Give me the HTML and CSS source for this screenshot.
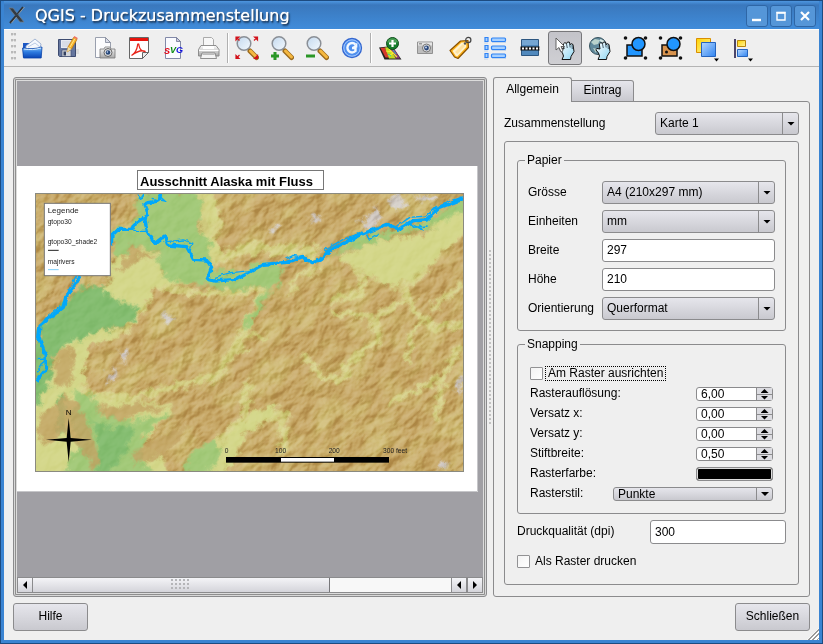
FILE: index.html
```html
<!DOCTYPE html>
<html lang="de">
<head>
<meta charset="utf-8">
<title>QGIS - Druckzusammenstellung</title>
<link rel="stylesheet" href="styles.css">
</head>
<body>
<svg class="defs" aria-hidden="true">
  <defs>
    <linearGradient id="lens" x1="0" y1="0" x2="1" y2="1"><stop offset="0" stop-color="#c3d9ef"/><stop offset="1" stop-color="#f4f9fd"/></linearGradient>
    <linearGradient id="blue" x1="0" y1="0" x2="1" y2="1"><stop offset="0" stop-color="#b5d8ff"/><stop offset="1" stop-color="#2f83f0"/></linearGradient>
    <linearGradient id="gold" x1="0" y1="0" x2="1" y2="1"><stop offset="0" stop-color="#ffd400"/><stop offset="1" stop-color="#fff3a0"/></linearGradient>
    <linearGradient id="folder" x1="0" y1="0" x2="0" y2="1"><stop offset="0" stop-color="#8cc8fb"/><stop offset=".45" stop-color="#2d7be0"/><stop offset="1" stop-color="#0a44b4"/></linearGradient>
    <linearGradient id="silver" x1="0" y1="0" x2="0" y2="1"><stop offset="0" stop-color="#fafafa"/><stop offset="1" stop-color="#a9a9a9"/></linearGradient>
    <linearGradient id="ice" x1="0" y1="0" x2="1" y2="1"><stop offset="0" stop-color="#fff"/><stop offset="1" stop-color="#8fd6f2"/></linearGradient>
    <symbol id="magnifier" viewBox="0 0 26 26">
      <path d="M15 14l3 3" stroke="#777" stroke-width="2"/>
      <path d="M17 16l6.500 6.500" stroke="#9b6a1c" stroke-width="5" stroke-linecap="round"/>
      <path d="M17.500 16l6 6" stroke="#f5b840" stroke-width="3" stroke-linecap="round"/>
      <circle cx="11" cy="8.500" r="6.800" fill="url(#lens)" stroke="#8a8f96" stroke-width="1.500"/>
    </symbol>
    <symbol id="hand" viewBox="0 0 16 19">
      <path d="M3 18.500h8.500l.5-3 3-5-1-7-1.800-.8-.8 1-1.200-2.700-1.900.2-.6 1.300-1.900-.8-1.500 1.300.7 5L2 7.500.8 8.700 3.500 12 4.500 15z" fill="url(#ice)" stroke="#111" stroke-width="1" stroke-linejoin="round"/>
      <path d="M7.500 3l.8 4M10.500 2.500l.7 4M13 4l.3 4" stroke="#234" stroke-width=".8" fill="none"/>
    </symbol>
  </defs>
</svg>

<div class="window">
  <header class="titlebar">
    <svg class="app-icon" width="18" height="18" viewBox="0 0 18 18" aria-hidden="true"><path d="M1 2h4l11 14h-4z" fill="#333b43" stroke="#6e7d8b" stroke-width=".8"/><path d="M15 1L9.500 8M8 10l-6 7" stroke="#2e3338" stroke-width="2"/><path d="M16.500 1l-6 7M8.500 11l-5 6" stroke="#a7a9a6" stroke-width=".8"/></svg>
    <h1>QGIS - Druckzusammenstellung</h1>
    <div class="window-buttons">
      <button type="button" aria-label="Minimieren"><svg width="20" height="20" viewBox="0 0 20 20"><path d="M5 14h9" stroke="#fff" stroke-width="2.400"/></svg></button>
      <button type="button" aria-label="Maximieren"><svg width="20" height="20" viewBox="0 0 20 20"><path d="M6 7h8v7H6z" fill="none" stroke="#fff" stroke-width="1.400"/><path d="M5.300 6.500h9.400" stroke="#fff" stroke-width="1.600"/></svg></button>
      <button type="button" aria-label="Schließen"><svg width="20" height="20" viewBox="0 0 20 20"><path d="M6 6l8 8M14 6l-8 8" stroke="#fff" stroke-width="2.200"/></svg></button>
    </div>
  </header>

  <nav class="toolbar" aria-label="Werkzeuge">
    <span class="grip"></span>
    <button type="button" aria-label="Öffnen"><svg viewBox="0 0 26 26"><path d="M2 8h6l2 2h10v12H2z" fill="#1b57c4"/><path d="M5 11l9-7 6 5-1 6H5z" fill="#f5f8fd" stroke="#8fa6cc" stroke-width=".8"/><path d="M7 12l7-4 5 4" fill="none" stroke="#bccce6"/><path d="M1.500 13c6 1 13 1 19.500-1l-.8 11H2.500z" fill="url(#folder)" stroke="#0a43a8" stroke-width=".8"/><path d="M3 14c6 1 11 .8 17-1" stroke="#d4ebff" fill="none"/></svg></button>
    <button type="button" aria-label="Speichern"><svg viewBox="0 0 26 26"><path d="M17 14h6v5h-5z" fill="#ddd"/><path d="M2.500 4.500h17v17h-16l-1-1z" fill="#66779f" stroke="#3d4b70"/><path d="M5 5h11v8H5z" fill="#e8ebf2"/><path d="M6 7h8M6 9h8M6 11h8" stroke="#c3c8d6" stroke-width=".8"/><path d="M6 15h9v6.500H6z" fill="#d3d6dc" stroke="#394568" stroke-width=".6"/><path d="M7.500 16.500H10v4H7.500z" fill="#33405f"/><path d="M11 17l1-5 5.500-9.500 3.500 2-5.500 9.500z" fill="#f9b62c" stroke="#b87312" stroke-width=".7"/><path d="M17.500 2.500l3.500 2 .8-1.500-3.500-2z" fill="#f1705d"/><path d="M14 12l5-8.500" stroke="#ffe58b"/><path d="M11 17l1-5 3.500 2z" fill="#eadcae"/></svg></button>
    <button type="button" aria-label="Als Bild exportieren"><svg viewBox="0 0 26 26"><path d="M4.500 2.500h10l5 5v15h-15z" fill="#fcfcfd" stroke="#9aa0ae"/><path d="M14.500 2.500v5h5z" fill="#d9dce6" stroke="#7f8597" stroke-width=".8"/><path d="M9 14h4l1-2h5l1 2h4v9H9z" fill="url(#silver)" stroke="#777" stroke-width=".8"/><circle cx="17" cy="17.500" r="4" fill="#ddd" stroke="#666"/><circle cx="17" cy="17.500" r="2.300" fill="#27487a"/><circle cx="16.400" cy="17" r=".8" fill="#cfe0ff"/></svg></button>
    <button type="button" aria-label="Als PDF exportieren"><svg viewBox="0 0 26 26"><path d="M3.500 2.500h19v15l-6 6h-13z" fill="#fff" stroke="#666"/><path d="M4 3h18v3H4z" fill="#e8130c"/><path d="M22.500 17.500h-6v6z" fill="#eee" stroke="#666"/><path d="M5.500 20.500c3-2 5.500-6 6-10 0-2 1.500-2 1.500 0 .5 3.500 3 6 6.500 6-3-1.500-8-.5-14 4z" fill="none" stroke="#e8241a" stroke-width="1.300"/></svg></button>
    <button type="button" aria-label="Als SVG exportieren"><svg viewBox="0 0 26 26"><path d="M4.500 2.500h11l4 4v17h-15z" fill="#fafbff" stroke="#8289a8"/><path d="M15.500 2.500v4h4z" fill="#c7cbe0" stroke="#6d7390" stroke-width=".8"/><text x="3" y="19" class="glyph"><tspan fill="#e30010">S</tspan><tspan fill="#098a12" dy="-1">V</tspan><tspan fill="#1010e0">G</tspan></text></svg></button>
    <button type="button" aria-label="Drucken"><svg viewBox="0 0 26 26"><path d="M7.500 13V2.500h8l2 2V13z" fill="#f7f7f7" stroke="#aaa"/><path d="M5 10.500h15l3 4v6.500H2.500v-6.500z" fill="url(#silver)" stroke="#858585" stroke-width=".9"/><path d="M7 11h11v3H7z" fill="#fff"/><path d="M3 15.500h19.500" stroke="#fff"/><path d="M6 18h13l1.500 5.500h-16z" fill="#f4f4f4" stroke="#777" stroke-width=".8"/><path d="M6.500 19.500h12" stroke="#bbb"/></svg></button>
    <span class="separator"></span>
    <button type="button" aria-label="Volle Ausdehnung"><svg viewBox="0 0 26 26"><use href="#magnifier" x="-1" width="26" height="26"/><g stroke="#d2111a" stroke-width="1.200" fill="#d2111a"><path d="M2 2h3L2 5zM23.500 2h-3l3 3zM2 23.500h3l-3-3zM23.500 23.500h-3l3-3zM2 2l3.500 3.500M23.500 2L20 5.500M2 23.500L5.500 20"/></g></svg></button>
    <button type="button" aria-label="Hineinzoomen"><svg viewBox="0 0 26 26"><use href="#magnifier" x="-1" width="26" height="26"/><path d="M6 17v8M2 21h8" stroke="#2a9626" stroke-width="3"/></svg></button>
    <button type="button" aria-label="Herauszoomen"><svg viewBox="0 0 26 26"><use href="#magnifier" x="-1" width="26" height="26"/><path d="M2 21h9" stroke="#2a9626" stroke-width="3"/></svg></button>
    <button type="button" aria-label="Aktualisieren"><svg viewBox="0 0 26 26"><circle cx="13" cy="13" r="9.500" fill="#4e8fee" stroke="#3567cf" stroke-width="1.300"/><circle cx="13" cy="13" r="8.200" fill="none" stroke="#a8cbff" stroke-width="1"/><path d="M16.500 9.500A4.700 4.700 0 1 0 16.500 16v-3H13" fill="none" stroke="#f3f8ff" stroke-width="2.400"/><path d="M18.300 7.500v5h-5z" fill="#f3f8ff"/></svg></button>
    <span class="separator"></span>
    <button type="button" aria-label="Karte hinzufügen"><svg viewBox="0 0 26 26"><path d="M2 12.500L15 11l9.500 13.500H7.500z" fill="#222"/><path d="M3.500 13L8 12.500l4 10H8.500z" fill="#d63a2d"/><path d="M8 12.500l4-.5 7 11.500h-7z" fill="#c3d922"/><path d="M12 12l4-.3 7 11.800h-4z" fill="#8f377a"/><path d="M9 16l6 1 5 5M12 14l4 4-4 3" stroke="#f4ec33" fill="none" stroke-width="1.200"/><path d="M11 19l3 2M16 15l3 4" stroke="#2bbac9"/><circle cx="15.500" cy="8.500" r="6" fill="#167d2c" stroke="#0c4d18"/><path d="M10 7.500a5.700 5.700 0 0 1 11 0" fill="#5fad66" opacity=".7"/><path d="M15.500 5v7M12 8.500h7" stroke="#fff" stroke-width="2.200"/></svg></button>
    <button type="button" aria-label="Bild hinzufügen"><svg viewBox="0 0 26 26"><path d="M5.500 7h15v11.500h-15z" fill="#bdbdbd" stroke="#919191"/><path d="M6 7.500h14v3H6z" fill="#e5e5e5"/><path d="M7 8h3v1.500H7z" fill="#999"/><circle cx="14.500" cy="13" r="4" fill="#dcdcdc" stroke="#777"/><circle cx="14.500" cy="13" r="2.400" fill="#29477a"/><circle cx="14" cy="12.500" r=".9" fill="#d7e5ff"/></svg></button>
    <button type="button" aria-label="Beschriftung hinzufügen"><svg viewBox="0 0 26 26"><path d="M3 15.500L13.500 6l7.500-.5.5 7L11 23.500 7.500 22z" fill="#ffb31a" stroke="#8a5200" stroke-width="1.200" stroke-linejoin="round"/><path d="M5.500 16l9-8.500h4.500l.3 4.500-9 9.500-1.500-.5z" fill="#fff3cf"/><path d="M8 17l8-8 2 2-7.500 8z" fill="#ffe2a0"/><circle cx="18" cy="8.500" r="1.200" fill="#555"/><circle cx="21.300" cy="5" r="2.600" fill="none" stroke="#444" stroke-width="1.200"/></svg></button>
    <button type="button" aria-label="Legende hinzufügen"><svg viewBox="0 0 26 26"><g fill="#a6d0ff" stroke="#2f83f5" stroke-width="1.200"><path d="M3 2.500h3v4H3zM3 10.500h3v4H3zM3 18.500h3v4H3z"/><rect x="9.500" y="3" width="14" height="3.500" rx="1"/><rect x="9.500" y="11" width="14" height="3.500" rx="1"/><rect x="9.500" y="19" width="14" height="3.500" rx="1"/></g><path d="M10 7.500h14M10 15.500h14M10 23.500h14M2 8h4M2 16h4M2 24h4" stroke="#c5d6ea"/></svg></button>
    <button type="button" aria-label="Maßstab hinzufügen"><svg viewBox="0 0 26 26"><path d="M4.500 4.500h17v16h-17z" fill="#5189bd" stroke="#2d5680"/><path d="M5 5h16v5H5z" fill="#75a6d2"/><path d="M3.500 13.500h19" stroke="#111" stroke-width="4"/><path d="M5 13.500h18" stroke="#fff" stroke-width="2" stroke-dasharray="2 1.500"/></svg></button>
    <button type="button" class="active" aria-pressed="true" aria-label="Objekt wählen"><svg viewBox="0 0 26 26"><use href="#hand" x="7" y="6" width="16" height="19"/><path d="M4 3v12l3-2.500 2 4.500 2-1-2-4.500h3.500z" fill="#fff" stroke="#555" stroke-width=".9"/></svg></button>
    <button type="button" aria-label="Inhalt verschieben"><svg viewBox="0 0 26 26"><circle cx="11" cy="11" r="8.500" fill="#60899b" stroke="#38545f"/><path d="M4 7l4-3 5 1-2 4-4 1zM6 13l4 1-1 4z" fill="#b9d2cc"/><path d="M13 5l4 2" stroke="#dbe9e7" stroke-width="2"/><use href="#hand" x="8" y="6" width="16" height="19"/></svg></button>
    <button type="button" aria-label="Gruppieren"><svg viewBox="0 0 26 26"><path d="M5 10h15v11H5z" fill="#2196ff" stroke="#111" stroke-width="1.500"/><circle cx="16.500" cy="9" r="6.500" fill="#2196ff" stroke="#111" stroke-width="1.500"/><g fill="#111"><circle cx="3.500" cy="3" r="1.800"/><circle cx="23.500" cy="3" r="1.800"/><circle cx="3.500" cy="23" r="1.800"/><circle cx="23.500" cy="23" r="1.800"/></g></svg></button>
    <button type="button" aria-label="Gruppierung aufheben"><svg viewBox="0 0 26 26"><path d="M5 10h15v11H5z" fill="#d9944e" stroke="#111" stroke-width="1.500"/><circle cx="16.500" cy="9" r="6.500" fill="#2196ff" stroke="#111" stroke-width="1.500"/><g fill="#111"><circle cx="3.500" cy="3" r="1.800"/><circle cx="23.500" cy="3" r="1.800"/><circle cx="3.500" cy="23" r="1.800"/><circle cx="23.500" cy="23" r="1.800"/><circle cx="9.500" cy="17" r="1.500"/></g></svg></button>
    <button type="button" class="menu" aria-label="Reihenfolge"><svg viewBox="0 0 26 26"><path d="M3.500 3.500h14v14h-14z" fill="url(#gold)" stroke="#d98e00"/><path d="M8.500 7.500h14v14h-14z" fill="url(#blue)" stroke="#2463be"/><path d="M21 23.500h5l-2.500 3z" fill="#000"/></svg></button>
    <button type="button" class="menu" aria-label="Ausrichten"><svg viewBox="0 0 26 26"><path d="M5 4v19" stroke="#4b4568" stroke-width="2"/><path d="M7.500 5.500h8v6h-8z" fill="url(#gold)" stroke="#b8860b"/><path d="M7.500 14.500h10v7h-10z" fill="url(#blue)" stroke="#2463be"/><path d="M18 23.500h5l-2.500 3z" fill="#000"/></svg></button>
  </nav>

  <main class="workspace">
    <section class="canvas-frame" aria-label="Zeichenfläche">
      <div class="canvas">
        <svg class="sheet" viewBox="0 0 461 326" role="img" aria-label="Kartenblatt">
          <defs>
            <filter id="relief" x="0" y="0" width="1" height="1" color-interpolation-filters="sRGB">
              <feTurbulence type="fractalNoise" baseFrequency=".02 .027" numOctaves="5" seed="11" result="n"/>
              <feDiffuseLighting in="n" surfaceScale="14" diffuseConstant=".95" lighting-color="#fff"><feDistantLight azimuth="265" elevation="36"/></feDiffuseLighting>
            </filter>
            <filter id="mottle" x="0" y="0" width="1" height="1" color-interpolation-filters="sRGB">
              <feTurbulence type="fractalNoise" baseFrequency=".009 .015" numOctaves="4" seed="4"/>
              <feColorMatrix values="0 0 0 0 .82  0 0 0 0 .76  0 0 0 0 .47  3 0 0 0 -1.200"/>
            </filter>
            <filter id="rough" x="-.05" y="-.05" width="1.100" height="1.100" color-interpolation-filters="sRGB">
              <feTurbulence type="fractalNoise" baseFrequency=".035" numOctaves="4" seed="8" result="n"/>
              <feGaussianBlur in="SourceGraphic" stdDeviation="5" result="b"/>
              <feDisplacementMap in="b" in2="n" scale="44" xChannelSelector="R" yChannelSelector="G"/>
            </filter>
            <filter id="braid" x="-.05" y="-.1" width="1.100" height="1.200">
              <feTurbulence type="fractalNoise" baseFrequency=".06" numOctaves="2" seed="3" result="n"/>
              <feDisplacementMap in="SourceGraphic" in2="n" scale="12" xChannelSelector="R" yChannelSelector="G"/>
            </filter>
          </defs>
          <rect width="461" height="326" fill="#fff"/>
          <path d="M460.500 0v325.500H0" fill="none" stroke="#c6c6c9"/>
          <rect x="120.500" y="4.500" width="186" height="19" fill="#fff" stroke="#777"/>
          <text x="123" y="20" class="map-title">Ausschnitt Alaska mit Fluss</text>
          <svg x="18" y="27" width="429" height="279" viewBox="15 9 1287 837">
            <rect x="15" y="9" width="1287" height="837" fill="#c5a563"/>
            <g transform="rotate(-42 658 427)" opacity=".7"><rect x="-200" y="-400" width="1700" height="1650" filter="url(#mottle)"/></g>
            <g filter="url(#rough)" opacity=".85" fill="none" stroke="#d5d486" stroke-linecap="round" stroke-linejoin="round">
              <path d="M540 20L560 110 530 150 570 200 650 175 850 185" stroke-width="34"/>
              <path d="M380 290L520 310 700 300 640 430 600 500 560 560 430 590 300 625 170 620 150 540 165 450 290 420 350 340" stroke-width="22"/>
              <path d="M940 200L1000 260 1000 310 900 330M1180 250L1120 290 1160 370 1220 415 1300 400M1120 330L1040 380 900 370M1030 390L1050 450 970 500 940 560 890 570 820 500" stroke-width="20"/>
              <path d="M1170 400L1140 440 1140 510M1300 280L1210 350M1280 480L1240 560 1080 640M1240 560L1220 680" stroke-width="18"/>
              <path d="M650 590L640 690 560 760 540 846M640 690L760 670 760 780M100 610L70 846" stroke-width="26"/>
              <path d="M780 310l20-50 60-20M600 490l60-10M700 440l-60 0" stroke-width="14"/>
            </g>
            <g fill="#d4d2dc" filter="url(#rough)" opacity=".8">
              <path d="M1010 75l30-20 15 30-30 30zM985 95l25-10 15 20-25 8zM1070 25l40-10 20 30-30 15zM1160 25l50-12 10 15-40 12zM725 110h20v20h-20zM230 550l30-15v30l-25 12zM270 490l20-15 10 20-20 20zM390 370l25-5 10 20-20 15zM840 80l20-10 10 20-20 10zM1220 820l25-10 10 30-20 5zM1280 560l20-5v40l-20 10z"/>
            </g>
            <g class="shade" transform="rotate(-42 658 427)"><rect x="-200" y="-400" width="1700" height="1650" filter="url(#relief)"/></g>
            <g filter="url(#rough)">
              <g fill="#d4d78a">
                <path d="M930 200L1050 150 1180 130 1320 40 1320 110 1230 200 1150 270 1080 290 990 240z"/>
                <path d="M500 856L560 770 630 700 720 640 740 670 640 740 590 856z"/>
                <path d="M225 310L250 200 340 170 400 200 380 250 480 280 380 290 340 350 330 370z"/>
                <path d="M0 680L60 560 90 470 160 430 280 420 180 470 165 520 160 620 300 630 430 640 400 700 330 760 400 800 420 860 0 860z"/>
                <path d="M510 0h40l10 80-20 60 30 40-20 60-40-80z" opacity=".8"/>
              </g>
              <g fill="#a2c978">
                <path d="M330 0L510 0 515 80 500 110 540 160 540 230 620 250 690 220 770 225 740 290 720 310 700 290 600 300 520 285 420 270 380 240 390 190 330 165 260 200 240 120 310 110z"/>
                <path d="M900 195L1000 135 1110 120 1220 70 1320 20 1320 50 1210 110 1080 140 980 175z"/>
                <path d="M700 300L640 410 655 415 720 315z"/>
                <path d="M450 856L480 790 560 750 570 790 530 856z"/>
                <path d="M130 600L190 620 220 680 320 690 430 670 350 730 330 780 360 860 90 860 150 770 130 690z"/>
              </g>
              <g fill="#84bd70">
                <path d="M150 290L225 290 240 320 330 355 310 400 200 430 100 465 70 500 55 590 0 680 0 560 30 420 90 350z"/>
                <path d="M165 650L190 700 250 715 310 705 300 760 250 840 200 846 210 760zM85 620l20 0 0 60-10 60-15-40z"/>
              </g>
              <g fill="#c2a363">
                <path d="M85 480L125 472 130 570 90 590 70 590zM110 620L150 650 180 720 210 800 190 846 160 780 100 720 60 760 20 740 30 680 70 640z" opacity=".8"/>
                <path d="M195 650L320 640 420 650 320 680 240 690zM300 790L390 740 480 700 410 790 310 830zM300 170l40 10 50 30-60-10-40 40-30 10z" opacity=".8"/>
              </g>
            </g>
            <g class="shade faint" transform="rotate(-42 658 427)"><rect x="-200" y="-400" width="1700" height="1650" filter="url(#relief)"/></g>
            <g fill="none" stroke="#00a8fb" stroke-linejoin="round" filter="url(#braid)">
              <path d="M392 10L388 32 345 40 352 66 345 90 352 125 375 160 403 138 412 165 470 170 490 208 530 210 545 232 532 268 552 273 620 268 700 223 770 217 815 200 848 218 870 210 900 180 990 135 1070 103 1110 118 1150 92 1190 90 1230 52 1302 25" stroke-width="10"/>
              <path d="M342 84L318 98 308 118H262L246 134 244 166M150 258L132 288 108 318 100 352 64 380 30 408 26 442 44 486 50 536 18 575" stroke-width="10"/>
              <path d="M320 10l12 16 10-14M385 15l20 18-40-8M310 124h40M412 155l50-5 24 10-6 24M552 262l50-14 60-6M770 206l20-10 50 10M1010 134l8 16 28-18M1100 108l40-26 50-4 30-30M1130 96l50 24-12-16M1150 112l40-4M1210 60l50-30" stroke-width="4"/>
              <path d="M20 506l26-2-24 40M140 256l-28 48M90 350l-42 34-14 20M880 182l60-34 60-22" stroke-width="4"/>
            </g>
            <path d="M116 684l6 60 64 5-64 6-6 62-6-62-62-6 62-5z" fill="#000"/>
            <text x="107" y="676" class="north">N</text>
            <rect x="43" y="40" width="198" height="217" fill="#fff" stroke="#777" stroke-width="3"/>
            <g class="legend-text">
              <text x="53" y="69" class="legend-head">Legende</text>
              <text x="53" y="102">gtopo30</text>
              <text x="53" y="162">gtopo30_shade2</text>
              <text x="53" y="222">majrivers</text>
              <text x="584" y="789">0</text><text x="735" y="789">100</text><text x="896" y="789">200</text><text x="1059" y="789">300 feet</text>
            </g>
            <path d="M54 181h32" stroke="#222" stroke-width="3"/>
            <path d="M54 239h32" stroke="#7fd0fb" stroke-width="3"/>
            <rect x="588" y="801" width="489" height="17" fill="#000"/>
            <rect x="753" y="804" width="159" height="11" fill="#fff"/>
            <rect x="16.500" y="10.500" width="1284" height="834" fill="none" stroke="#8a8a80" stroke-width="3"/>
          </svg>
        </svg>
      </div>
      <div class="scrollbar">
        <button type="button" class="arrow-left" aria-label="Nach links"></button>
        <div class="track"><div class="thumb"><span></span></div></div>
        <button type="button" class="arrow-left" aria-label="Zurück"></button>
        <button type="button" class="arrow-right" aria-label="Nach rechts"></button>
      </div>
    </section>

    <span class="splitter"></span>

    <section class="side">
      <div class="tabs" role="tablist">
        <button type="button" role="tab" class="tab selected" aria-selected="true">Allgemein</button>
        <button type="button" role="tab" class="tab" aria-selected="false">Eintrag</button>
      </div>
      <form class="panel">
        <div class="row composition">
          <label for="composition">Zusammenstellung</label>
          <span class="combo"><select id="composition"><option>Karte 1</option></select></span>
        </div>
        <div class="frame">
          <fieldset class="paper">
            <legend>Papier</legend>
            <label for="size">Grösse</label>
            <span class="combo"><select id="size"><option>A4 (210x297 mm)</option></select></span>
            <label for="units">Einheiten</label>
            <span class="combo"><select id="units"><option>mm</option></select></span>
            <label for="width">Breite</label>
            <input id="width" class="field" type="text" value="297">
            <label for="height">Höhe</label>
            <input id="height" class="field" type="text" value="210">
            <label for="orientation">Orientierung</label>
            <span class="combo"><select id="orientation"><option>Querformat</option></select></span>
          </fieldset>
          <fieldset class="snapping">
            <legend>Snapping</legend>
            <div class="check"><input id="snap" type="checkbox"><label for="snap" class="focused">Am Raster ausrichten</label></div>
            <div class="row small"><label for="grid">Rasterauflösung:</label><span class="spin"><input id="grid" type="text" value="6,00"><button type="button" class="up" aria-label="Mehr"></button><button type="button" class="down" aria-label="Weniger"></button></span></div>
            <div class="row small"><label for="offx">Versatz x:</label><span class="spin"><input id="offx" type="text" value="0,00"><button type="button" class="up" aria-label="Mehr"></button><button type="button" class="down" aria-label="Weniger"></button></span></div>
            <div class="row small"><label for="offy">Versatz y:</label><span class="spin"><input id="offy" type="text" value="0,00"><button type="button" class="up" aria-label="Mehr"></button><button type="button" class="down" aria-label="Weniger"></button></span></div>
            <div class="row small"><label for="pen">Stiftbreite:</label><span class="spin"><input id="pen" type="text" value="0,50"><button type="button" class="up" aria-label="Mehr"></button><button type="button" class="down" aria-label="Weniger"></button></span></div>
            <div class="row small"><label for="color">Rasterfarbe:</label><button id="color" type="button" class="swatch"></button></div>
            <div class="row small"><label for="style">Rasterstil:</label><span class="combo"><select id="style"><option>Punkte</option></select></span></div>
          </fieldset>
          <div class="row quality">
            <label for="dpi">Druckqualität (dpi)</label>
            <input id="dpi" class="field" type="text" value="300">
          </div>
          <div class="check"><input id="raster" type="checkbox"><label for="raster">Als Raster drucken</label></div>
        </div>
      </form>
    </section>
  </main>

  <footer class="actions">
    <button type="button" class="push">Hilfe</button>
    <button type="button" class="push">Schließen</button>
  </footer>
  <span class="resize"></span>
</div>
</body>
</html>
```
FILE: styles.css
```css
:root {
  --face: #efefef;
  --line: #8b8b8d;
  --button: linear-gradient(#e6e6ec, #c9c9cf);
}

* { box-sizing: border-box; }

body {
  margin: 0;
  font: 12px/14px "Liberation Sans", sans-serif;
  color: #000;
}

button, input, select {
  font: inherit;
  color: inherit;
  margin: 0;
  padding: 0;
  border: 0;
  border-radius: 0;
  outline: 0;
}

.defs { position: absolute; width: 0; height: 0; }

.window {
  position: relative;
  display: flex;
  flex-direction: column;
  min-height: 100vh;
  background: var(--face);
  border: solid #3a84d2;
  border-width: 1px 4px 4px;
  border-top-color: #163c69;
  outline: 1px solid #1d4b80;
  outline-offset: -1px;
}

.titlebar {
  display: flex;
  align-items: center;
  height: 28px;
  padding: 0 3px 0 4px;
  gap: 9px;
  background: linear-gradient(#4d96df, #3a78bd 4px, #408cda);
}

.titlebar h1 {
  flex: 1;
  margin: 0;
  padding-top: 1px;
  font: 16px/20px "DejaVu Sans", sans-serif;
  color: #fff;
  text-shadow: 0 0 1px #fff, 1px 1px 1px #16365c, 1px 2px 2px #16365c;
}

.window-buttons { display: flex; gap: 2px; padding-top: 1px; }

.window-buttons button {
  display: grid;
  place-items: center;
  width: 22px;
  height: 22px;
  border: 1px solid #2e66a6;
  border-radius: 3px;
  background: #5596d8;
}

.toolbar {
  display: flex;
  align-items: center;
  gap: 1px;
  height: 38px;
  padding: 0 7px;
  border-top: 1px solid #fff;
  border-bottom: 1px solid #b4b4b4;
}

.toolbar button {
  display: grid;
  place-items: center;
  width: 34px;
  height: 34px;
  border-radius: 3px;
  background: none;
}

.toolbar button.menu { width: 36px; }
.toolbar button svg { width: 26px; height: 26px; overflow: visible; }

.toolbar button.active {
  border: 1px solid #77777a;
  background: linear-gradient(#c3c3c9, #cfcfd3);
}

.grip {
  width: 5px;
  height: 30px;
  background: radial-gradient(circle at 1px 1px, #b9b9b9 1px, transparent 2px) 0 0 / 3px 6px;
}

.separator {
  width: 2px;
  height: 30px;
  border-left: 1px solid #b0b0b0;
  border-right: 1px solid #fff;
}

.glyph { font: italic bold 9px "Liberation Sans", sans-serif; }

.workspace {
  flex: 1;
  display: grid;
  grid-template-columns: minmax(0, 1fr) 6px 317px;
  padding: 10px 9px 0;
}

.canvas-frame {
  display: flex;
  flex-direction: column;
  padding: 3px;
  border: 1px solid var(--line);
  border-radius: 3px;
  box-shadow: inset 0 0 0 1px #d8d8d8, inset 0 0 0 2px #8f8f8f, inset 0 0 0 3px #dcdcdc;
}

.canvas {
  flex: 1;
  display: flex;
  align-items: center;
  background: #a09fa4;
  overflow: hidden;
}

.sheet { flex: none; width: 461px; }

.map-title { font: bold 13px "Liberation Sans", sans-serif; }
.north { font: 24px "Liberation Sans", sans-serif; }
.legend-text { font: 20px "Liberation Sans", sans-serif; fill: #222; }
.legend-head { font-size: 24px; }
.shade { mix-blend-mode: soft-light; opacity: .42; }
.faint { opacity: .12; }

.scrollbar {
  display: flex;
  height: 16px;
  border: solid #8b8b8d;
  border-width: 1px 0;
  background: #f8f8f8;
}

.scrollbar button {
  display: grid;
  place-items: center;
  width: 16px;
  border: solid #8b8b8d;
  border-width: 0 1px;
  background: linear-gradient(#f4f4f7, #d4d4da);
}

.scrollbar button::before {
  content: "";
  width: 4px;
  height: 8px;
  background: #000;
}

.arrow-left::before { clip-path: polygon(100% 0, 0 50%, 100% 100%); }
.arrow-right::before { clip-path: polygon(0 0, 100% 50%, 0 100%); }

.track { flex: 1; display: flex; }

.thumb {
  display: grid;
  place-items: center;
  width: 71%;
  border-right: 1px solid #77777a;
  background: linear-gradient(#f4f4f7, #d4d4da);
}

.thumb span {
  width: 20px;
  height: 12px;
  background: radial-gradient(circle at 1px 1px, #b5b5b8 1px, transparent 1px) 0 0 / 4px 4px;
}

.splitter {
  align-self: center;
  justify-self: center;
  width: 3px;
  height: 174px;
  background: radial-gradient(circle at 1px 1px, #c2c2c2 1px, transparent 1px) 0 0 / 3px 4px;
}

.side { display: flex; flex-direction: column; }

.tabs { display: flex; align-items: flex-end; height: 25px; z-index: 1; }

.tab {
  width: 62px;
  height: 22px;
  padding-bottom: 2px;
  border: 1px solid var(--line);
  border-left: 0;
  border-radius: 0 3px 0 0;
  background: var(--button);
}

.tab.selected {
  width: 79px;
  height: 25px;
  border-left: 1px solid var(--line);
  border-bottom: 0;
  border-radius: 3px 3px 0 0;
  background: var(--face);
}

.panel {
  flex: 1;
  display: flex;
  flex-direction: column;
  gap: 6px;
  margin-top: -1px;
  padding: 10px 10px 11px;
  border: 1px solid var(--line);
  border-radius: 0 3px 3px 3px;
}

.row { display: flex; align-items: center; justify-content: space-between; }

label { padding-bottom: 2px; }

.composition .combo { width: 144px; }

.frame {
  flex: 1;
  display: flex;
  flex-direction: column;
  gap: 6px;
  padding: 11px 12px;
  border: 1px solid var(--line);
  border-radius: 3px;
}

fieldset {
  min-width: 0;
  margin: 0;
  border: 1px solid var(--line);
  border-radius: 3px;
}

legend { margin-left: -3px; padding: 0 2px; }

.paper {
  display: grid;
  grid-template-columns: 68px minmax(0, 1fr);
  align-items: center;
  gap: 6px;
  padding: 14px 10px 10px;
}

.snapping {
  display: flex;
  flex-direction: column;
  gap: 6px;
  padding: 15px 12px 12px;
}

.snapping legend { margin-left: -5px; }

.combo { position: relative; display: block; height: 23px; }

.combo select {
  display: block;
  appearance: none;
  width: 100%;
  height: 100%;
  padding: 0 28px 2px 4px;
  border: 1px solid var(--line);
  border-radius: 3px;
  background: var(--button);
}

.combo::before {
  content: "";
  position: absolute;
  inset: 1px 16px 1px auto;
  width: 1px;
  background: var(--line);
}

.combo::after {
  content: "";
  position: absolute;
  inset: 0 4px 0 auto;
  width: 8px;
  height: 4px;
  margin-block: auto;
  background: #000;
  clip-path: polygon(0 0, 100% 0, 50% 100%);
}

.field {
  height: 23px;
  min-width: 0;
  padding: 0 4px 1px;
  border: 1px solid var(--line);
  border-radius: 3px;
  background: #fff;
}

.small { height: 14px; }
.small .combo { width: 160px; height: 14px; }
.small .combo select { line-height: 12px; }

.spin {
  display: grid;
  grid-template: 6px 6px / 1fr 16px;
  width: 77px;
  border: 1px solid var(--line);
  border-radius: 3px;
  background: #fff;
}

.spin input {
  grid-row: 1 / 3;
  min-width: 0;
  padding-left: 4px;
  background: none;
}

.spin button {
  display: grid;
  place-items: center;
  border-left: 1px solid var(--line);
  background: #dcdce1;
}

.spin .down { border-top: 1px solid var(--line); }

.spin button::before {
  content: "";
  width: 8px;
  height: 4px;
  background: #000;
}

.spin .up::before { clip-path: polygon(50% 0, 100% 100%, 0 100%); }
.spin .down::before { clip-path: polygon(0 0, 100% 0, 50% 100%); }

.swatch {
  width: 77px;
  height: 14px;
  border: 1px solid var(--line);
  border-radius: 3px;
  background: #000;
  box-shadow: inset 0 0 0 1px #ddd;
}

.quality .field { width: 136px; height: 24px; }

.check { display: flex; align-items: center; gap: 2px; height: 15px; }

.frame > .check { margin-top: 4px; gap: 5px; }

.check input {
  appearance: none;
  width: 13px;
  height: 13px;
  border: 1px solid #929294;
  border-radius: 1px;
  background: linear-gradient(135deg, #f3f3f3, #fff);
}

.check .focused { padding: 0 3px 1px; outline: 1px dotted #000; outline-offset: -1px; }

.actions {
  display: flex;
  justify-content: space-between;
  padding: 6px 9px 9px;
}

.push {
  width: 75px;
  height: 28px;
  padding-bottom: 2px;
  border: 1px solid var(--line);
  border-radius: 3px;
  background: var(--button);
}

.resize {
  position: absolute;
  right: 0;
  bottom: 0;
  width: 12px;
  height: 12px;
  clip-path: polygon(100% 0, 100% 100%, 0 100%);
  background: repeating-linear-gradient(135deg, #9a9a9a 0 1px, #fff 1px 3px);
}
```
